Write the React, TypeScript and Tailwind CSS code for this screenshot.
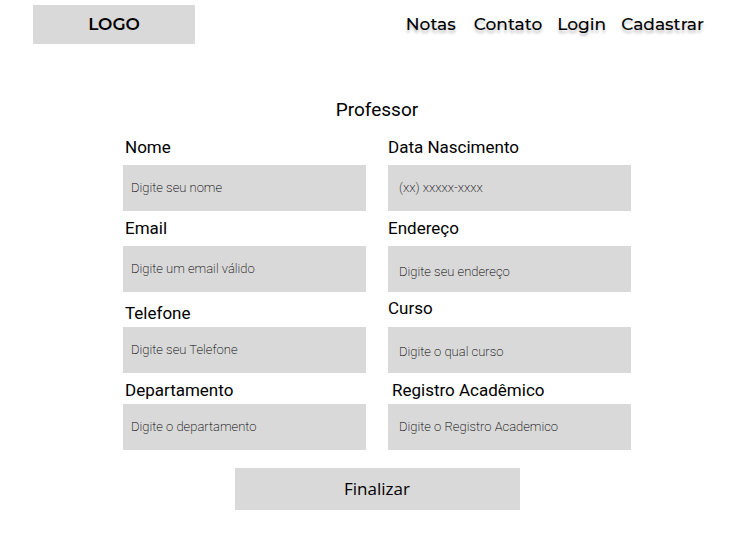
type Field = {
  id: string;
  label: string;
  placeholder: string;
  type: string;
  labelClass: string;
  inputClass: string;
};

const fields: Field[] = [
  { id: "nome", label: "Nome", placeholder: "Digite seu nome", type: "text", labelClass: "h-[35px] items-center pb-0.5 pl-0.5", inputClass: "px-2 pb-0.5" },
  { id: "nascimento", label: "Data Nascimento", placeholder: "(xx) xxxxx-xxxx", type: "text", labelClass: "h-[35px] items-center pb-0.5", inputClass: "px-[11px] pb-0.5" },
  { id: "email", label: "Email", placeholder: "Digite um email válido", type: "email", labelClass: "h-[35px] items-center pb-0.5 pl-0.5", inputClass: "px-2 pb-0.5" },
  { id: "endereco", label: "Endereço", placeholder: "Digite seu endereço", type: "text", labelClass: "h-[35px] items-center pb-0.5", inputClass: "px-[11px] pt-1" },
  { id: "telefone", label: "Telefone", placeholder: "Digite seu Telefone", type: "tel", labelClass: "h-[35px] items-end pl-0.5", inputClass: "px-2 pb-0.5" },
  { id: "curso", label: "Curso", placeholder: "Digite o qual curso", type: "text", labelClass: "h-[35px] items-center pb-1", inputClass: "px-[11px] pt-0.5" },
  { id: "departamento", label: "Departamento", placeholder: "Digite o departamento", type: "text", labelClass: "h-[31px] items-end pl-0.5", inputClass: "px-2 pb-0.5" },
  { id: "registro", label: "Registro Acadêmico", placeholder: "Digite o Registro Academico", type: "text", labelClass: "h-[31px] items-end pl-1", inputClass: "px-[11px] pb-0.5" },
];

const links = ["Notas", "Contato", "Login", "Cadastrar"];

export default function App() {
  return (
    <div className="min-h-screen bg-white font-['Roboto',sans-serif] text-black">
      <header className="flex items-center justify-between pt-[5px] pr-[50px] pl-[33px] font-['Montserrat',sans-serif] text-[17px]">
        <a href="#inicio" className="flex h-[39px] w-[162px] items-center justify-center bg-[#d9d9d9] font-semibold">
          LOGO
        </a>
        <nav className="flex gap-[15px] font-medium [text-shadow:0_3px_3px_rgb(0_0_0_/_0.25)]">
          {links.map((link) => (
            <a key={link} href={"#" + link.toLowerCase()} className="first:mr-[3px]">
              {link}
            </a>
          ))}
        </nav>
      </header>

      <main className="mx-auto max-w-[508px] pt-[53px]">
        <h1 className="text-center text-[19px] leading-[26px]">Professor</h1>
        <form className="pt-[7px]" onSubmit={(e) => e.preventDefault()}>
          <div className="grid grid-cols-2 gap-x-[22px]">
            {fields.map((f) => (
              <div key={f.id}>
                <label htmlFor={f.id} className={"flex text-[17px] leading-7 " + f.labelClass}>
                  {f.label}
                </label>
                <input
                  id={f.id}
                  type={f.type}
                  placeholder={f.placeholder}
                  className={"block h-[46px] w-full bg-[#d9d9d9] text-[13px] font-extralight placeholder:text-black placeholder:opacity-100 " + f.inputClass}
                />
              </div>
            ))}
          </div>
          <button
            type="submit"
            className="mx-auto mt-[18px] block h-[42px] w-[285px] bg-[#d9d9d9] font-['Open_Sans',sans-serif] text-[17px]"
          >
            Finalizar
          </button>
        </form>
      </main>
    </div>
  );
}
